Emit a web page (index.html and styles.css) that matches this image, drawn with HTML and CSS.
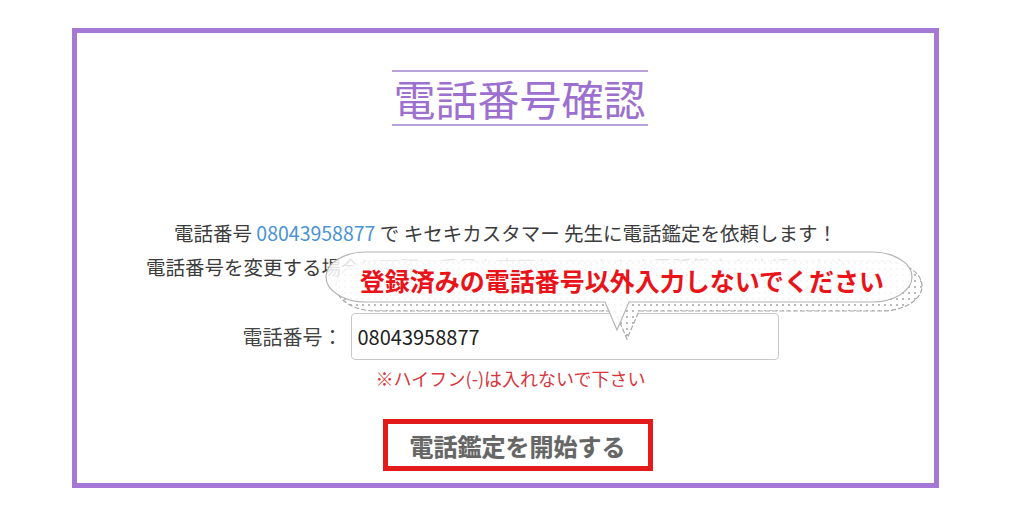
FILE: index.html
```html
<!DOCTYPE html>
<html lang="ja">
<head>
    <meta charset="UTF-8">
    <meta name="viewport" content="width=device-width, initial-scale=1.0">
    <title>電話番号確認</title>
    <link rel="stylesheet" href="styles.css">
</head>
<body>
    <div class="frame">
        <h1 class="title">電話番号確認</h1>

        <p class="lead">
            電話番号 <span class="tel">08043958877</span> で キセキカスタマー 先生に電話鑑定を依頼します！<br>
            電話番号を変更する場合は下記の番号を変更していただき電話鑑定を依頼します。
        </p>

        <div class="row">
            <label for="tel">電話番号：</label>
            <input id="tel" class="tel-input" type="text" value="08043958877">
        </div>
        <p class="hint">※ハイフン(-)は入れないで下さい</p>

        <button class="start">電話鑑定を開始する</button>

        <!-- 注意の吹き出し -->
        <div class="balloon">
            <svg width="610" height="100" viewBox="0 0 610 100">
                <defs>
                    <pattern id="dots" width="6" height="6" patternUnits="userSpaceOnUse">
                        <rect width="6" height="6" fill="#fff"/>
                        <circle cx="3" cy="3" r="0.9" fill="#9a9a9a"/>
                    </pattern>
                </defs>
                <path transform="translate(10 9)" d="M46,7 H552 A40,25 0 0 1 552,57 H309 L297,85 L285,57 H46 A40,25 0 0 1 46,7 Z"
                      fill="url(#dots)" stroke="#a8a8a8" stroke-width="1.2" stroke-dasharray="5 2"/>
                <path d="M46,7 H552 A40,25 0 0 1 552,57 H309 L297,85 L285,57 H46 A40,25 0 0 1 46,7 Z"
                      fill="rgba(255,255,255,0.86)" stroke="#b4b4b4" stroke-width="1.2"/>
            </svg>
            <p class="balloon-text">登録済みの電話番号以外入力しないでください</p>
        </div>
    </div>
</body>
</html>
```

FILE: styles.css
```css
* {
    margin: 0;
    padding: 0;
    box-sizing: border-box;
}

body {
    font-family: "Noto Sans CJK JP", "Noto Sans", sans-serif;
    background: #fff;
    color: #3a3a3a;
}

.frame {
    position: relative;
    width: 867px;
    height: 460px;
    margin: 28px 0 0 72px;
    border: 5px solid #a678d6;
    display: flex;
    flex-direction: column;
    align-items: center;
}

.title {
    margin-top: 37px;
    margin-left: 28px;
    width: 256px;
    border-top: 2px solid #b9a2dc;
    border-bottom: 2px solid #b9a2dc;
    font-size: 42px;
    font-weight: 400;
    line-height: 52px;
    text-align: center;
    color: #9d70d0;
}

.lead {
    margin-top: 90px;
    font-size: 19.5px;
    line-height: 34px;
    text-align: center;
    color: #3c3c3c;
}

.tel {
    color: #4a93d4;
}

.row {
    margin-top: 29px;
    display: flex;
    align-items: center;
    gap: 8px;
    margin-left: 10px;
}

.row label {
    font-size: 20px;
    color: #444;
}

.tel-input {
    width: 428px;
    height: 47px;
    border: 1px solid #c9c9c9;
    border-radius: 4px;
    padding: 0 6px;
    font-family: inherit;
    font-size: 20px;
    color: #222;
}

.hint {
    margin-top: 5px;
    margin-left: 10px;
    line-height: 26px;
    font-size: 18px;
    color: #d8363c;
}

.start {
    margin-top: 28px;
    margin-left: 24px;
    width: 270px;
    height: 52px;
    border: 5px solid #e31b1b;
    background: #fff;
    font-family: inherit;
    font-size: 24px;
    font-weight: 700;
    color: #666;
    text-shadow: 0 0 1px rgba(0, 0, 0, 0.25);
}

/* 吹き出しは入力欄の上に重ねる */
.balloon {
    position: absolute;
    left: 243px;
    top: 212px;
    width: 610px;
    height: 100px;
}

.balloon svg {
    position: absolute;
    left: 0;
    top: 0;
}

.balloon-text {
    position: absolute;
    left: 6px;
    top: 14px;
    width: 592px;
    line-height: 42px;
    text-align: center;
    font-size: 25px;
    font-weight: 700;
    color: #e8141a;
}
```
